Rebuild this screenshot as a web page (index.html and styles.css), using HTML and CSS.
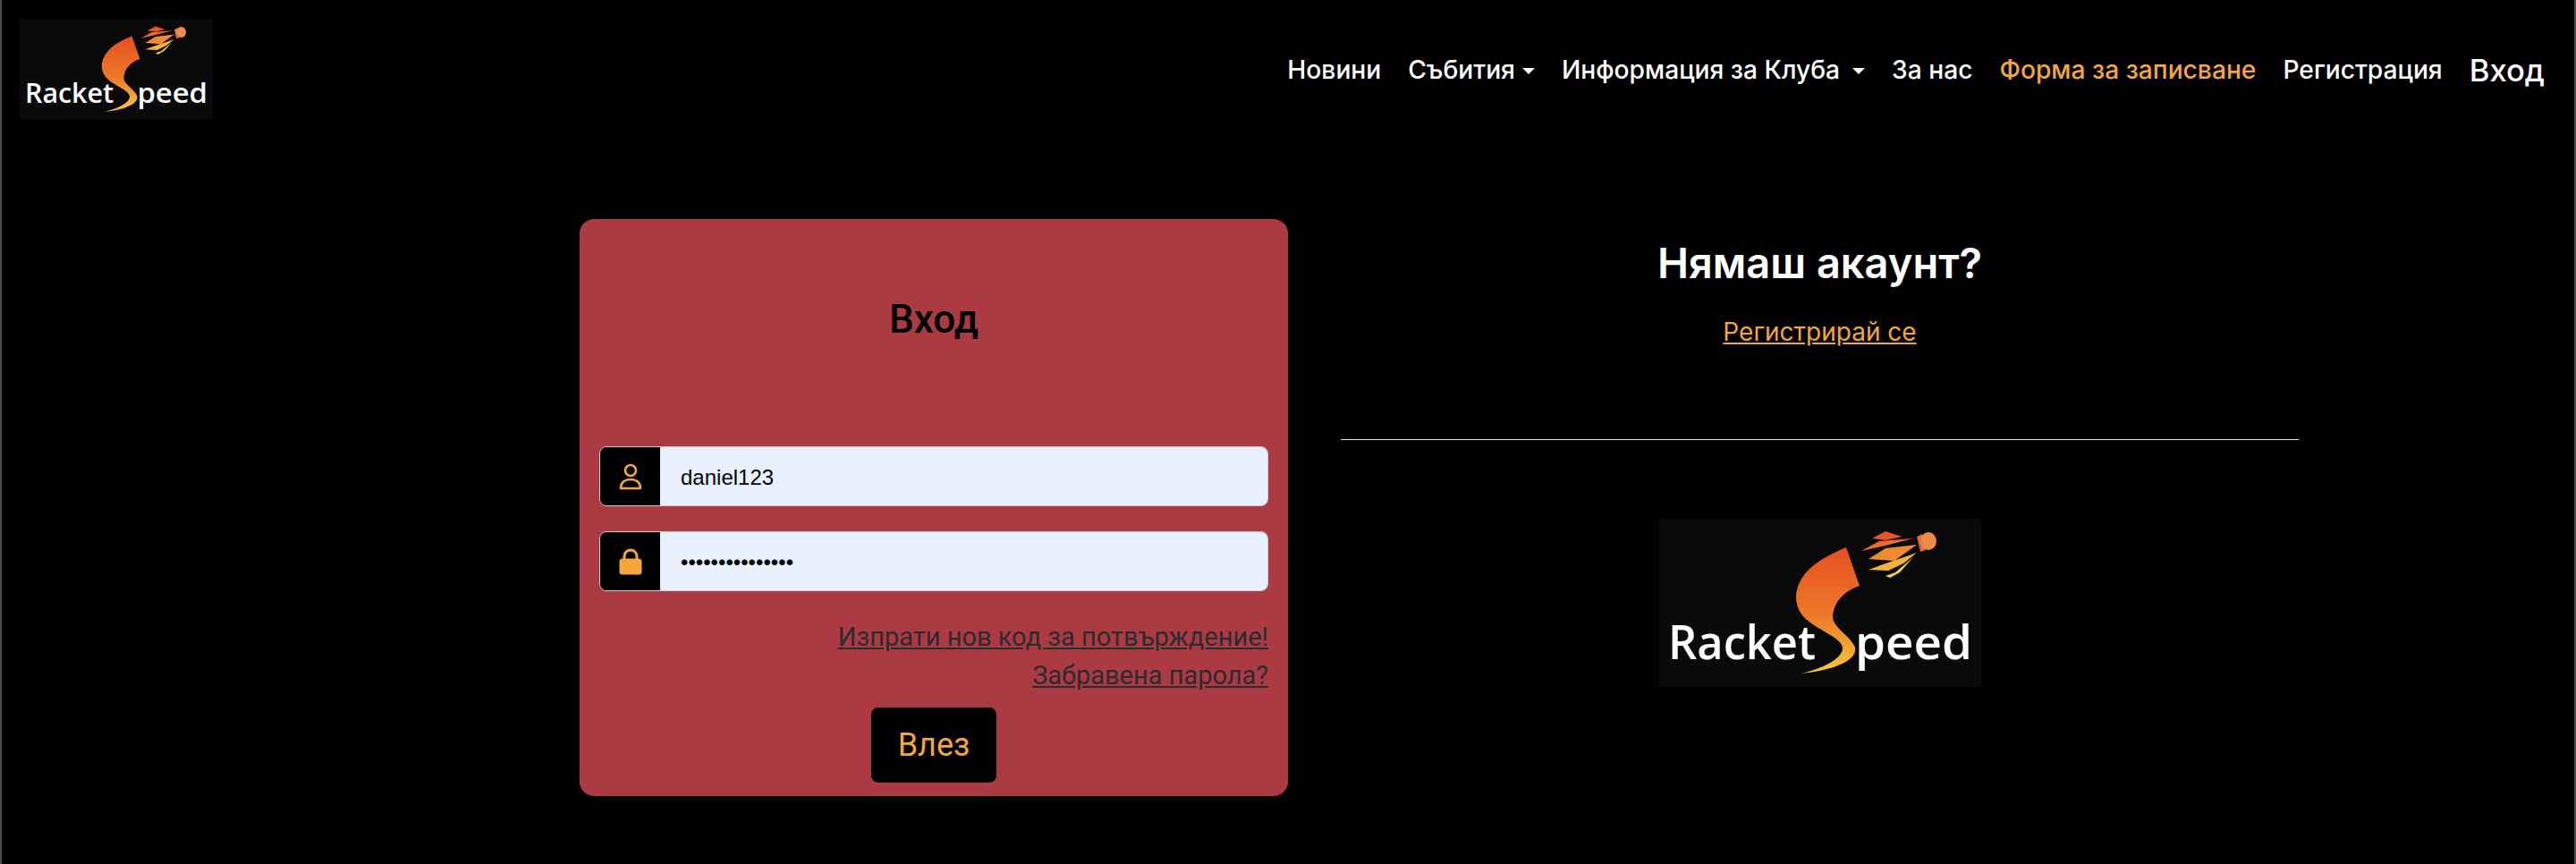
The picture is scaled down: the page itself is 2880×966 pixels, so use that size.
FILE: index.html

```html
<!DOCTYPE html>
<html lang="bg">

<head>
    <meta charset="UTF-8">
    <meta name="viewport" content="width=device-width, initial-scale=1.0">
    <title>Вход</title>
    <link rel="stylesheet" href="styles.css">
</head>

<body>
    <!-- logo drawn once, used in the nav and in the right column -->
    <svg class="defs" width="0" height="0">
        <defs>
            <linearGradient id="tail" x1="0" y1="0" x2="0" y2="1">
                <stop offset="0" stop-color="#e64f22" />
                <stop offset="0.55" stop-color="#ee7a28" />
                <stop offset="1" stop-color="#f6c83e" />
            </linearGradient>
            <symbol id="logo" viewBox="0 0 360 188">
                <rect width="360" height="188" fill="#0a0a0a" />
                <path fill="url(#tail)"
                    d="M209 32 L224 75 C208 80 196 92 194 108 C193 122 214 130 219 144 C222 160 190 170 159 173 C180 168 204 158 205 145 C205 132 175 125 160 108 C148 92 152 72 168 56 C180 45 195 38 209 32 Z" />
                <polygon fill="#e9562a" points="238,22 253,14 271,20 253,24" />
                <polygon fill="#ea6a2a" points="226,36 246,25 284,22 253,30" />
                <polygon fill="#f08a30" points="234,45 253,33 288,29 263,47" />
                <polygon fill="#f4b23a" points="234,57 253,50 288,38 273,50 256,58" />
                <polygon fill="#f7d23e" points="253,64 264,60 284,43 269,60 258,66" />
                <path fill="#e06a30" d="M288 20 L294 17 L298 35 L292 37 Z" />
                <ellipse cx="301" cy="25" rx="9" ry="10" fill="#ee8a4a" />
                <text class="logo-text" x="10" y="157" textLength="165" lengthAdjust="spacingAndGlyphs">Racket</text>
                <text class="logo-text" x="219" y="157" textLength="131" lengthAdjust="spacingAndGlyphs">peed</text>
            </symbol>
        </defs>
    </svg>

    <header class="nav">
        <a class="brand" href="#"><svg class="brand-logo"><use href="#logo" /></svg></a>
        <ul class="menu">
            <li><a href="#">Новини</a></li>
            <li><a class="caret" href="#">Събития</a></li>
            <li><a class="caret caret-wide" href="#">Информация за Клуба</a></li>
            <li><a href="#">За нас</a></li>
            <li><a class="accent" href="#">Форма за записване</a></li>
            <li><a href="#">Регистрация</a></li>
            <li><a class="big" href="#">Вход</a></li>
        </ul>
    </header>

    <main class="page">
        <form class="card">
            <h2 class="card-title">Вход</h2>
            <div class="field">
                <span class="field-icon">
                    <svg viewBox="0 0 26 30" width="26" height="30" fill="none" stroke="#f4a73a" stroke-width="2.6">
                        <circle cx="13" cy="8" r="6" />
                        <path d="M2 28 C2 21 7 18 13 18 C19 18 24 21 24 28 Z" stroke-linejoin="round" />
                    </svg>
                </span>
                <input class="field-input" type="text" value="daniel123">
            </div>
            <div class="field">
                <span class="field-icon">
                    <svg viewBox="0 0 26 30" width="26" height="30">
                        <path d="M6 13 V9 A7 7 0 0 1 20 9 V13" fill="none" stroke="#f4a73a" stroke-width="3" />
                        <rect x="0.5" y="11.5" width="25" height="18" rx="3.5" fill="#f4a73a" />
                    </svg>
                </span>
                <input class="field-input" type="password" value="daniel123daniel">
            </div>
            <div class="links">
                <a href="#">Изпрати нов код за потвърждение!</a>
                <a href="#">Забравена парола?</a>
            </div>
            <button class="submit" type="button">Влез</button>
        </form>

        <section class="side">
            <h1 class="side-title">Нямаш акаунт?</h1>
            <a class="side-link" href="#">Регистрирай се</a>
            <hr class="side-line">
            <svg class="side-logo"><use href="#logo" /></svg>
        </section>
    </main>
</body>

</html>
```

FILE: styles.css

```css
* {
    margin: 0;
    padding: 0;
    box-sizing: border-box;
    list-style: none;
}

body {
    background-color: #000;
    color: #fff;
    font-family: Roboto, "Noto Sans", sans-serif;
    font-size: 29px;
    min-height: 966px;
    border-left: 2px solid #4a4a4a;
    border-right: 2px solid #4a4a4a;
}

.defs {
    display: block;
    height: 0;
}

.logo-text {
    font-family: "Open Sans", sans-serif;
    font-size: 52px;
    font-weight: 600;
    fill: #fff;
}

.nav {
    display: flex;
    justify-content: space-between;
    align-items: center;
    padding: 20px 33px 0 20px;
}

.brand,
.brand-logo {
    display: block;
    width: 216px;
    height: 115px;
}

.menu {
    display: flex;
    align-items: center;
    gap: 30px;
    font-family: Inter, sans-serif;
    font-size: 28.2px;
}

.menu a {
    color: #fff;
    font-weight: 500;
    text-decoration: none;
}

.menu a.accent {
    color: #f4a73a;
}

.menu a.big {
    font-size: 34.6px;
}

.caret::after {
    content: "";
    display: inline-block;
    margin-left: 8px;
    vertical-align: 5px;
    border-top: 7px solid #fff;
    border-left: 7px solid transparent;
    border-right: 7px solid transparent;
}

.caret-wide::after {
    margin-left: 14px;
}

.page {
    display: flex;
    align-items: flex-start;
    gap: 59px;
    padding: 110px 0 0 646px;
}

.card {
    width: 792px;
    height: 645px;
    padding: 88px 22px 0;
    background-color: #ab3a42;
    border-radius: 16px;
    color: #000;
}

.card-title {
    font-size: 44px;
    font-weight: 500;
    line-height: 48px;
    text-align: center;
    margin-bottom: 118px;
}

.field {
    display: flex;
    height: 67px;
    margin-bottom: 28px;
    border: 1px solid #ccc;
    border-radius: 8px;
    overflow: hidden;
}

.field-icon {
    display: flex;
    align-items: center;
    justify-content: center;
    width: 67px;
    background-color: #000;
}

.field-input {
    flex: 1;
    border: 0;
    outline: 0;
    padding: 3px 0 0 23px;
    background-color: #e8f0fe;
    color: #000;
    font-family: "Liberation Sans", sans-serif;
    font-size: 24px;
}

.links {
    display: flex;
    flex-direction: column;
    align-items: flex-end;
    gap: 1px;
    padding-top: 2px;
    line-height: 42px;
}

.links a {
    color: #2b2b30;
}

.submit {
    display: block;
    width: 140px;
    height: 84px;
    margin: 15px auto 0;
    background-color: #000;
    border: 0;
    border-radius: 8px;
    color: #f4a73a;
    font-family: Roboto, sans-serif;
    font-size: 36px;
}

.side {
    display: flex;
    flex-direction: column;
    align-items: center;
    width: 1071px;
    font-family: Inter, sans-serif;
}

.side-title {
    font-size: 47px;
    font-weight: 600;
    line-height: 62px;
    margin-top: 18px;
}

.side-link {
    margin-top: 25px;
    color: #f4a73a;
    font-size: 28px;
    line-height: 42px;
}

.side-line {
    width: 100%;
    height: 1px;
    margin-top: 99px;
    border: 0;
    background-color: #e0e0e0;
}

.side-logo {
    display: block;
    width: 360px;
    height: 188px;
    margin-top: 88px;
}
```
